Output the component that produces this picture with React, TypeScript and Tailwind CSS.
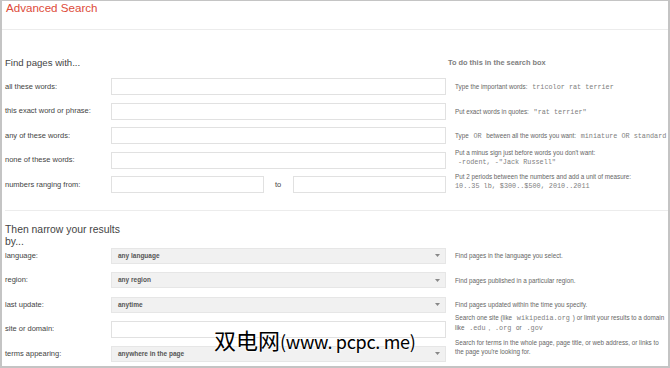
import type { ReactNode } from "react";

const SANS = "font-['Liberation_Sans',Arial,sans-serif]";

function Mono({ children }: { children: ReactNode }) {
  return (
    <span className="mx-[3px] font-['Liberation_Mono','Courier_New',monospace] text-[6.8px] text-[#808080]">
      {children}
    </span>
  );
}

function Arrow() {
  return (
    <svg width="5" height="3" viewBox="0 0 5 3" className="shrink-0">
      <polygon points="0,0 5,0 2.5,3" fill="#888" />
    </svg>
  );
}

type Row = {
  label: string;
  field: ReactNode;
  desc: ReactNode;
  descClass?: string;
};

const input = "h-[17px] w-[335px] border border-[#e1e1e1] bg-white";

function Select({ value }: { value: string }) {
  return (
    <div className="flex h-[16px] w-[335px] items-center justify-between border border-[#e6e6e6] bg-[#f1f1f1] pl-[6px] pr-[5px]">
      <span className="text-[6.5px] font-bold text-[#555]">{value}</span>
      <Arrow />
    </div>
  );
}

const findRows: Row[] = [
  {
    label: "all these words:",
    field: <div className={input} />,
    desc: (
      <>
        Type the important words: <Mono>tricolor rat terrier</Mono>
      </>
    ),
  },
  {
    label: "this exact word or phrase:",
    field: <div className={input} />,
    desc: (
      <>
        Put exact words in quotes: <Mono>"rat terrier"</Mono>
      </>
    ),
  },
  {
    label: "any of these words:",
    field: <div className={input} />,
    desc: (
      <>
        Type <Mono>OR</Mono> between all the words you want: <Mono>miniature OR standard</Mono>
      </>
    ),
  },
  {
    label: "none of these words:",
    field: <div className={input} />,
    desc: (
      <>
        Put a minus sign just before words you don't want:
        <br />
        <Mono>-rodent, -"Jack Russell"</Mono>
      </>
    ),
    descClass: "mt-[-4px]",
  },
  {
    label: "numbers ranging from:",
    field: (
      <div className="flex w-[335px] items-center">
        <div className="h-[17px] w-[153px] border border-[#e1e1e1] bg-white" />
        <span className="ml-[11px] w-[18px] text-[7.5px] text-[#444]">to</span>
        <div className="h-[17px] w-[153px] border border-[#e1e1e1] bg-white" />
      </div>
    ),
    desc: (
      <>
        Put 2 periods between the numbers and add a unit of measure:
        <br />
        <span className="font-['Liberation_Mono','Courier_New',monospace] text-[6.8px] text-[#808080]">
          10..35 lb, $300..$500, 2010..2011
        </span>
      </>
    ),
    descClass: "mt-[-4px]",
  },
];

const narrowRows: Row[] = [
  {
    label: "language:",
    field: <Select value="any language" />,
    desc: "Find pages in the language you select.",
  },
  {
    label: "region:",
    field: <Select value="any region" />,
    desc: "Find pages published in a particular region.",
  },
  {
    label: "last update:",
    field: <Select value="anytime" />,
    desc: "Find pages updated within the time you specify.",
  },
  {
    label: "site or domain:",
    field: <div className={input} />,
    desc: (
      <>
        Search one site (like <Mono>wikipedia.org</Mono>) or limit your results to a domain
        <br />
        like <Mono>.edu</Mono>, <Mono>.org</Mono> or <Mono>.gov</Mono>
      </>
    ),
    descClass: "mt-[-8px]",
  },
  {
    label: "terms appearing:",
    field: <Select value="anywhere in the page" />,
    desc: (
      <>
        Search for terms in the whole page, page title, or web address, or links to
        <br />
        the page you're looking for.
      </>
    ),
    descClass: "mt-[-7px]",
  },
];

function FormRow({ row }: { row: Row }) {
  return (
    <div className="flex h-[17px] items-center">
      <div className="w-[106px] shrink-0 text-[7.5px] text-[#444]">{row.label}</div>
      <div className="shrink-0">{row.field}</div>
      <div
        className={`ml-[9px] self-start whitespace-nowrap text-[6.3px] leading-[9px] text-[#666] ${
          row.descClass ?? "mt-[4px]"
        }`}
      >
        {row.desc}
      </div>
    </div>
  );
}

export default function App() {
  return (
    <div
      className={`relative h-[368px] w-[670px] overflow-hidden border-x-2 border-b-2 border-t border-[#c4c4c4] bg-white ${SANS}`}
    >
      {/* Header */}
      <div className="h-[29px] border-b border-[#ececec] pl-[4px]">
        <h1 className="text-[11.6px] leading-[14px] text-[#dd4b39]">Advanced Search</h1>
      </div>

      {/* Find pages with */}
      <div className="px-[3px] pt-[27px]">
        <div className="flex h-[12px] items-center">
          <h2 className="w-[443px] text-[9.6px] text-[#444]">Find pages with...</h2>
          <span className="text-[7.4px] font-bold text-[#808080]">To do this in the search box</span>
        </div>
        <div className="mt-[9px] flex flex-col gap-[7.5px]">
          {findRows.map((r) => (
            <FormRow key={r.label} row={r} />
          ))}
        </div>
      </div>

      <div className="ml-[3px] mt-[17px] border-t border-[#ececec]" />

      {/* Then narrow your results */}
      <div className="px-[3px] pt-[13px]">
        <h2 className="w-[125px] text-[10.4px] leading-[12px] text-[#444]">Then narrow your results by...</h2>
        <div className="mt-[-1px] flex flex-col gap-[7.5px]">
          {narrowRows.map((r) => (
            <FormRow key={r.label} row={r} />
          ))}
        </div>
      </div>

      {/* Watermark */}
      <div className="absolute left-[212px] top-[327px] flex items-baseline whitespace-nowrap font-['Noto_Sans_CJK_SC',sans-serif] leading-none text-black [text-shadow:0_0_2px_#fff,0_0_2px_#fff,0_0_3px_#fff]">
        <span className="text-[22px]">双电网</span>
        <span className="text-[18px] tracking-[-0.3px]">(www. pcpc. me)</span>
      </div>
    </div>
  );
}
